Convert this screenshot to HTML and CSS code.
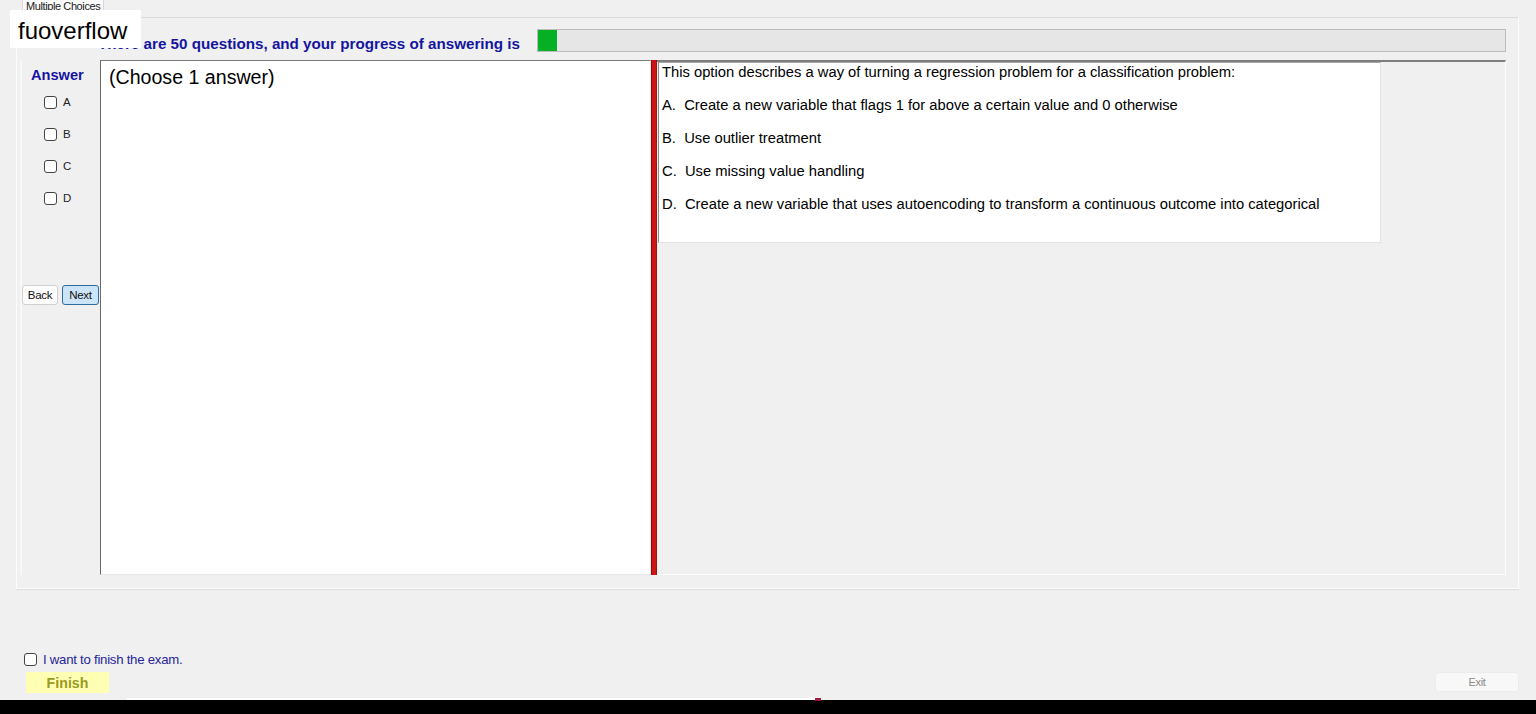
FILE: index.html
```html
<!DOCTYPE html>
<html lang="en">
<head>
    <meta charset="UTF-8">
    <title>Multiple Choices</title>
    <link rel="stylesheet" href="styles.css">
</head>
<body>
<div class="brand">fuoverflow</div>
<div class="tabs">
    <span class="tab">Multiple Choices</span>
</div>
<div class="page">
    <div class="header">
        <span class="header-text">There are 50 questions, and your progress of answering is</span>
        <div class="progress">
            <div class="progress-fill" style="width: 2%"></div>
        </div>
    </div>
    <div class="main">
        <div class="answer-col">
            <div class="answer-title">Answer</div>
            <label class="opt"><input type="checkbox" class="chk"><span>A</span></label>
            <label class="opt"><input type="checkbox" class="chk"><span>B</span></label>
            <label class="opt"><input type="checkbox" class="chk"><span>C</span></label>
            <label class="opt"><input type="checkbox" class="chk"><span>D</span></label>
            <div class="nav">
                <button class="btn">Back</button>
                <button class="btn btn-next">Next</button>
            </div>
        </div>
        <div class="question">(Choose 1 answer)</div>
        <div class="splitter"></div>
        <div class="options-panel">
            <div class="options">
                <p>This option describes a way of turning a regression problem for a classification problem:</p>
                <p>A.  Create a new variable that flags 1 for above a certain value and 0 otherwise</p>
                <p>B.  Use outlier treatment</p>
                <p>C.  Use missing value handling</p>
                <p>D.  Create a new variable that uses autoencoding to transform a continuous outcome into categorical</p>
            </div>
        </div>
    </div>
</div>
<div class="footer">
    <label class="finish-check"><input type="checkbox" class="chk"><span>I want to finish the exam.</span></label>
    <div class="footer-row">
        <button class="btn-finish">Finish</button>
        <button class="btn-exit">Exit</button>
    </div>
</div>
<div class="taskbar">
    <div class="taskbar-strip"><span class="taskbar-mark"></span></div>
</div>
</body>
</html>
```

FILE: styles.css
```css
html{
    height: 100%;
}
body{
    position: relative;
    display: flex;
    flex-direction: column;
    height: 714px;
    margin: 0;
    padding: 0;
    overflow: hidden;
    background-color: #f0f0f0;
    font-family: "Liberation Sans", Arial, sans-serif;
    color: #000;
}
.brand{
    position: absolute;
    left: 10px;
    top: 10px;
    width: 131px;
    height: 38px;
    box-sizing: border-box;
    padding: 7px 0 0 8px;
    background-color: #fff;
    font-size: 24px;
    line-height: 28px;
    z-index: 5;
}
.tabs{
    display: flex;
    height: 17px;
    padding-left: 22px;
}
.tab{
    height: 17px;
    box-sizing: border-box;
    padding: 0 3px;
    background-color: #fbfbfb;
    border: 1px solid #dadada;
    border-top: none;
    border-bottom: none;
    font-size: 11px;
    line-height: 13px;
    letter-spacing: -0.4px;
    color: #222;
}
.page{
    width: 1503px;
    height: 572px;
    margin-left: 16px;
    box-sizing: border-box;
    border: 1px solid #fcfcfc;
    border-top-color: #dadada;
    box-shadow: 0 1px 0 #dcdcdc;
}
.header{
    display: flex;
    align-items: center;
    height: 23px;
    margin: 11px 12px 0 81px;
}
.header-text{
    font-size: 15.2px;
    font-weight: bold;
    color: #1515a0;
    white-space: nowrap;
    padding-top: 6px;
}
.progress{
    flex: 1;
    height: 23px;
    margin-left: 17px;
    box-sizing: border-box;
    border: 1px solid #bcbcbc;
    background-color: #e6e6e6;
}
.progress-fill{
    height: 100%;
    background-color: #06b025;
}
.main{
    display: flex;
    height: 515px;
    margin: 8px 12px 0 3px;
}
.answer-col{
    width: 80px;
    flex-shrink: 0;
    box-sizing: border-box;
    border-left: 2px solid #f8f8f8;
}
.answer-title{
    padding: 7px 0 0 9px;
    font-size: 14.6px;
    font-weight: bold;
    color: #1515a0;
    line-height: 17px;
}
.opt{
    display: flex;
    align-items: center;
    height: 32px;
    padding-left: 22px;
    font-size: 11.5px;
    color: #222;
}
.opt:first-of-type{
    margin-top: 2px;
}
.chk{
    -webkit-appearance: none;
    appearance: none;
    width: 13px;
    height: 13px;
    margin: 0 6px 0 0;
    box-sizing: border-box;
    border: 1px solid #444;
    border-radius: 3px;
    background-color: #fff;
}
.nav{
    display: flex;
    gap: 4px;
    margin-top: 71px;
}
.btn{
    width: 36px;
    height: 20px;
    padding: 0;
    box-sizing: border-box;
    border: 1px solid #d0d0d0;
    border-radius: 3px;
    background-color: #fdfdfd;
    font-family: "Liberation Sans", Arial, sans-serif;
    font-size: 11.5px;
    letter-spacing: -0.3px;
    color: #111;
}
.btn-next{
    width: 37px;
    background-color: #cce4f7;
    border-color: #2e6d9a;
}
.question{
    width: 551px;
    flex-shrink: 0;
    box-sizing: border-box;
    padding: 4px 8px;
    background-color: #fff;
    border: 1px solid #e6e6e6;
    border-top-color: #7a7a7a;
    border-left-color: #6a6a6a;
    font-size: 19.6px;
    line-height: 24px;
}
.splitter{
    width: 6px;
    flex-shrink: 0;
    box-sizing: border-box;
    background-color: #cc1414;
    border-left: 1px solid #8a1010;
    border-right: 1px solid #a01212;
}
.options-panel{
    flex: 1;
    box-sizing: border-box;
    border-top: 2px solid #7e7e7e;
    border-right: 1px solid #fcfcfc;
    border-bottom: 1px solid #fcfcfc;
}
.options{
    width: 723px;
    height: 181px;
    margin-left: 1px;
    box-sizing: border-box;
    padding: 1px 0 0 3px;
    background-color: #fff;
    border: 1px solid #e2e2e2;
    border-top-color: #a8a8a8;
    border-left-color: #8c8c8c;
}
.options p{
    margin: 0;
    height: 33px;
    font-size: 14.75px;
    line-height: 17px;
    white-space: pre;
}
.footer{
    flex: 1;
    padding: 63px 17px 0 24px;
}
.finish-check{
    display: flex;
    align-items: center;
    height: 14px;
    font-size: 13.2px;
    letter-spacing: -0.25px;
    color: #25259a;
}
.footer-row{
    display: flex;
    justify-content: space-between;
    align-items: flex-start;
    margin-top: 6px;
    padding-left: 2px;
}
.btn-finish{
    width: 83px;
    height: 21px;
    padding: 0;
    border: none;
    background-color: #ffffb4;
    font-family: "Liberation Sans", Arial, sans-serif;
    font-size: 14.2px;
    font-weight: bold;
    color: #9a9a1e;
}
.btn-exit{
    width: 84px;
    height: 20px;
    padding: 0;
    border: 1px solid #ececec;
    border-radius: 3px;
    background-color: #f8f8f8;
    font-family: "Liberation Sans", Arial, sans-serif;
    font-size: 11px;
    letter-spacing: -0.3px;
    color: #8c8c8c;
}
.taskbar{
    position: relative;
    height: 14px;
    background-color: #000;
}
.taskbar-strip{
    position: absolute;
    left: 127px;
    top: -2px;
    width: 688px;
    height: 2px;
    background-color: #fff;
}
.taskbar-mark{
    position: absolute;
    left: 688px;
    top: 0;
    width: 6px;
    height: 3px;
    background-color: #a3183e;
}
```
